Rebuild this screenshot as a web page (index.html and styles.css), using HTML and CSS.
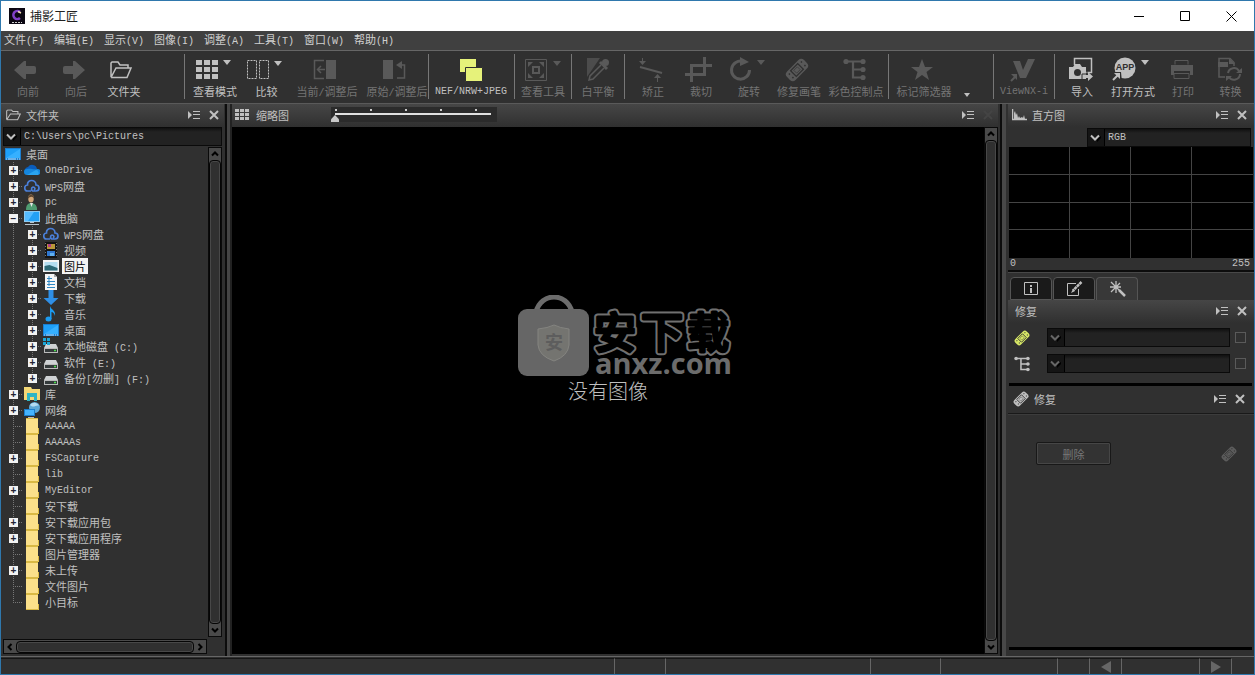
FILE: index.html
```html
<!DOCTYPE html>
<html lang="zh-CN">
<head>
<meta charset="utf-8">
<title>捕影工匠</title>
<link rel="stylesheet" href="styles.css">
</head>
<body>
<svg class="defs" aria-hidden="true">
  <symbol id="folder-line" viewBox="0 0 22 17"><path d="M1 15.500V2.500L2.500 1H8l2 2.500h7.500V7M1 15.500h16L21 7H6.500L1 15.500" fill="none" stroke="currentColor" stroke-width="1.500"/></symbol>
  <symbol id="grid" viewBox="0 0 15 12"><path d="M0 0h4v3H0zM5 0h4v3H5zM10 0h4v3h-4zM0 4h4v3H0zM5 4h4v3H5zM10 4h4v3h-4zM0 8h4v3H0zM5 8h4v3H5zM10 8h4v3h-4z" fill="currentColor"/></symbol>
  <symbol id="menu" viewBox="0 0 14 10"><path d="M1 1v8l4-4zM6 1h7v1H6zM6 4h7v1H6zM6 8h7v1H6z" fill="currentColor"/></symbol>
  <symbol id="close" viewBox="0 0 10 10"><path d="M1 1l8 8M9 1l-8 8" stroke="currentColor" stroke-width="2"/></symbol>
  <symbol id="chev" viewBox="0 0 12 8"><path d="M8 4l4-2v2L8 8z" fill="#000"/><path d="M2 1.500l4 4 4-4" fill="none" stroke="currentColor" stroke-width="2"/></symbol>
  <symbol id="bandage" viewBox="0 0 24 24"><g transform="rotate(-45 12 12)"><rect x="0" y="6" width="24" height="12" rx="4" fill="currentColor"/><rect x="7" y="8" width="10" height="8" fill="none" stroke="#303030" stroke-width="1.300"/><path d="M3 9.500h1.500M3 14.500h1.500M20 9.500h1.500M20 14.500h1.500" stroke="#303030" stroke-width="1.500"/><rect x="9.500" y="10" width="5" height="4" fill="none" stroke="#303030" stroke-width=".6"/></g></symbol>
  <symbol id="nodes" viewBox="0 0 23 23"><path d="M3 3.500h17M10 3.500v16h10M10 11.500h10" fill="none" stroke="currentColor" stroke-width="2.200"/><g fill="currentColor"><circle cx="3" cy="3.500" r="2.600"/><circle cx="20" cy="3.500" r="2.600"/><circle cx="20" cy="11.500" r="2.600"/><circle cx="20" cy="19.500" r="2.600"/></g></symbol>
  <symbol id="desk" viewBox="0 0 16 16"><rect x="0" y="2" width="16" height="12" fill="#1c7fd0"/><path d="M1 3h14v9H1z" fill="#1ea0f8"/><path d="M1 12L15 3v9z" fill="#36b0ff"/><path d="M1 13h14" stroke="#bfe4ff" stroke-dasharray="1 1 8 1"/></symbol>
  <symbol id="onedrive" viewBox="0 0 16 16"><path d="M1 11a4 4 0 0 1 3-6 5 5 0 0 1 9 2z" fill="#0a5dbd"/><path d="M3 13a3 3 0 0 1 0-6c4-1 6 1 10 0a3 3 0 0 1 1 6z" fill="#1586dd"/><path d="M3 13l9-5a3 3 0 0 1 2 5z" fill="#2aa4ef"/></symbol>
  <symbol id="wps" viewBox="0 0 16 16"><path d="M7 13H4a3 3 0 0 1-.5-6C3 1 12 1 12 7c4 0 4 6 0 6H9.500C7 13 7 9.500 9 9c2 0 2.500 2 1 3" fill="none" stroke="#4a7fd8" stroke-width="1.700"/></symbol>
  <symbol id="user" viewBox="0 0 16 16"><path d="M2 16c0-5 2-7 5-7s6 2 6 6v1z" fill="#4f9c72"/><path d="M6 9l1.500 4L9 9z" fill="#e8e8e8"/><ellipse cx="7" cy="4.500" rx="2.800" ry="4" fill="#d2a679"/><path d="M4 5C3 0 11-1 10 5 9 2 6 2 4 5z" fill="#5d4630"/></symbol>
  <symbol id="pc" viewBox="0 0 16 16"><rect x="0" y="1" width="16" height="11" fill="#8fc9ee"/><path d="M1 2h14v9H1z" fill="#23a0f4"/><path d="M1 2h9l-6 9H1z" fill="#55bbff"/><path d="M1 14.500h14M6 12.500h4" stroke="#b8c4cc"/></symbol>
  <symbol id="video" viewBox="0 0 16 16"><path d="M2 0h12v16H2z" fill="#141414"/><path d="M4 2h8v5H4z" fill="#b99639"/><path d="M5 2h3v3H5z" fill="#b33c88"/><path d="M4 9h8v5H4z" fill="#2f77d0"/><path d="M7 11h4v3H7z" fill="#62b1ed"/><path d="M2.500 1v14M13.500 1v14" stroke="#777" stroke-dasharray="1 2"/></symbol>
  <symbol id="pic" viewBox="0 0 16 16"><path d="M0 2h16v12H0z" fill="#f4f4f4"/><path d="M1.500 4h13v8.500h-13z" fill="#b3ddf0"/><path d="M1.500 8l5-1 8 3v2.500h-13z" fill="#2c6976"/></symbol>
  <symbol id="doc" viewBox="0 0 16 16"><path d="M2 0h9l3 3v13H2z" fill="#f6f6f6"/><path d="M11 0v3h3" fill="#aaa"/><path d="M4 4.500h5M4 7.500h8M4 10.500h8M4 13.500h8M6 2v10" stroke="#2e87c4"/></symbol>
  <symbol id="down" viewBox="0 0 16 16"><path d="M5.500 0h5v8h5L8 15 .5 8h5z" fill="#2f8fe6"/></symbol>
  <symbol id="music" viewBox="0 0 16 16"><path d="M7 0c1 4 6 4 5 10-1-3-2-4-3.500-4v7H7z" fill="#1c9cf2"/><ellipse cx="5.500" cy="13" rx="3" ry="2.500" fill="#1c9cf2"/></symbol>
  <symbol id="disk" viewBox="0 0 16 16"><path d="M3 6h10l2 4v5H1v-5z" fill="#cfd2d4"/><path d="M1.500 10.500h13v4h-13z" fill="#343a3b" stroke="#bbb"/><path d="M11 12.500h2" stroke="#4ce04c" stroke-width="1.500"/></symbol>
  <symbol id="sysdisk" viewBox="0 0 16 16"><use href="#disk"/><path d="M0 0h3v3H0zM4 0h3v3H4zM0 4h3v3H0zM4 4h3v3H4z" fill="#1ba7d8"/></symbol>
  <symbol id="lib" viewBox="0 0 16 16"><path d="M0 1h7l1 2h8v11H0z" fill="#f5d875"/><path d="M3 7h10v8h-3v-4H6v4H3z" fill="#2eb5c5"/></symbol>
  <symbol id="net" viewBox="0 0 16 16"><circle cx="10.500" cy="5.500" r="5.500" fill="#5ea8d6"/><path d="M6 3c3-4 8-2 9 1-3-2-5 3-9-1" fill="#b4dcf2"/><path d="M0 7h11v7H0z" fill="#1b7fcd"/><path d="M1 8h9v5H1z" fill="#45b4ff"/><path d="M4 15.500h6" stroke="#bbb"/></symbol>
  <symbol id="dir" viewBox="0 0 16 16"><path d="M2 0h12v10h1v6H2z" fill="#fbe08a"/><path d="M2 15.500h12.500V10M2 .5h12" fill="none" stroke="#d9b944"/></symbol>
</svg>

<div class="window">
  <header class="titlebar">
    <svg class="logo" viewBox="0 0 16 16"><path d="M0 0h16v16H0z" fill="#0b0712"/><path d="M11 4a4 4 0 1 0 0 6" fill="none" stroke="#8040c8" stroke-width="2.500"/><path d="M9 3.500l3 1.500" stroke="#f0dfb0" stroke-width="1.500"/><path d="M3 14.500h10" stroke="#ccc" stroke-dasharray="2 1"/></svg>
    <h1>捕影工匠</h1>
    <div class="winbtns">
      <button aria-label="最小化"><svg viewBox="0 0 11 11"><path d="M0 5.500h10" stroke="#000"/></svg></button>
      <button aria-label="最大化"><svg viewBox="0 0 11 11"><path d="M.5.5h9v9h-9z" fill="none" stroke="#000"/></svg></button>
      <button aria-label="关闭"><svg viewBox="0 0 11 11"><path d="M.5.5l10 10M10.500.5l-10 10" stroke="#000"/></svg></button>
    </div>
  </header>

  <nav class="menubar">
    <button>文件<span class="en">(F)</span></button>
    <button>编辑<span class="en">(E)</span></button>
    <button>显示<span class="en">(V)</span></button>
    <button>图像<span class="en">(I)</span></button>
    <button>调整<span class="en">(A)</span></button>
    <button>工具<span class="en">(T)</span></button>
    <button>窗口<span class="en">(W)</span></button>
    <button>帮助<span class="en">(H)</span></button>
  </nav>

  <div class="toolbar">
    <div class="group first">
      <button class="tool off"><svg viewBox="0 0 48 26"><path d="M10 14L20 5h2v5h8q2 0 2 2v4q0 2-2 2h-8v5h-2z" fill="currentColor"/></svg><span>向前</span></button>
      <button class="tool off"><svg viewBox="0 0 48 26"><path d="M33 14L23 5h-2v5h-8q-2 0-2 2v4q0 2 2 2h8v5h2z" fill="currentColor"/></svg><span>向后</span></button>
      <button class="tool"><svg viewBox="0 0 48 26"><path d="M11 21V7l1-1h6l2 3h8v3M11 21.500h16L31 12H16L11 21.500" fill="none" stroke="currentColor" stroke-width="1.500"/></svg><span>文件夹</span></button>
    </div>
    <div class="group">
      <button class="tool w60"><svg viewBox="0 0 48 26"><path d="M5 4h6v5H5zM13 4h6v5h-6zM21 4h6v5h-6zM5 11h6v5H5zM13 11h6v5h-6zM21 11h6v5h-6zM5 18h6v5H5zM13 18h6v5h-6zM21 18h6v5h-6zM32 4h8l-4 5z" fill="currentColor"/></svg><span>查看模式</span></button>
      <button class="tool w42"><svg viewBox="0 0 48 26"><path d="M4.500 4.500h9v18h-9zM16.500 4.500h9v18h-9z" fill="none" stroke="currentColor" stroke-dasharray="2 1"/><path d="M31 5h8l-4 5z" fill="currentColor"/></svg><span>比较</span></button>
      <button class="tool off w78"><svg viewBox="0 0 48 26"><path d="M23 4h10v19H23z" fill="currentColor"/><path d="M21 4.500h-9.500v18H21M22 13.500h-7M18 10l-3.500 3.500L18 17" fill="none" stroke="currentColor" stroke-width="1.500"/></svg><span>当前<b class="en">/</b>调整后</span></button>
      <button class="tool off w62"><svg viewBox="0 0 48 26"><path d="M10 4h10v19H10zM29 5v8l-6-4z" fill="currentColor"/><path d="M28 9h3.500v13H24" fill="none" stroke="currentColor" stroke-width="1.500"/></svg><span>原始<b class="en">/</b>调整后</span></button>
    </div>
    <div class="group nef">
      <button class="tool w84"><svg viewBox="0 0 48 26"><path d="M13 3h16v13H13z" fill="#e6f27a"/><path d="M18.500 11.500h17v14h-17z" fill="#e6f27a" stroke="#303030"/></svg><span class="en">NEF/NRW+JPEG</span></button>
    </div>
    <div class="group">
      <button class="tool off w56"><svg viewBox="0 0 48 26"><path d="M6.500 3.500h21v21h-21z" fill="none" stroke="currentColor"/><path d="M14 11h6v6h-6z" fill="none" stroke="currentColor" stroke-width="2"/><path d="M9 6h5l-5 5zM25 6h-5l5 5zM9 22h5l-5-5zM25 22h-5l5-5zM34 5h8l-4 5z" fill="currentColor"/></svg><span>查看工具</span></button>
    </div>
    <div class="group">
      <button class="tool off w52"><svg viewBox="0 0 48 26"><path d="M13 2h13L13 21z" fill="currentColor" opacity=".7"/><path d="M26 6l7 7" stroke="currentColor" stroke-width="3"/><circle cx="31.500" cy="6.500" r="3.500" fill="currentColor"/><path d="M27 9L16 20l-1 4 4-1L30 12" fill="#303030" stroke="currentColor" stroke-width="1.500"/></svg><span>白平衡</span></button>
    </div>
    <div class="group pad">
      <button class="tool off"><svg viewBox="0 0 48 26"><path d="M11 11l22 6" stroke="currentColor" stroke-width="2"/><path d="M13.500 2v4M28.500 21v5" stroke="currentColor"/><path d="M10 5h7l-3.500 4zM25 22h7l-3.500-4z" fill="currentColor"/></svg><span>矫正</span></button>
      <button class="tool off"><svg viewBox="0 0 48 26"><path d="M14.500 26V9.500H35M8 18.500h19.500V1" fill="none" stroke="currentColor" stroke-width="3"/></svg><span>裁切</span></button>
      <button class="tool off"><svg viewBox="0 0 48 26"><path d="M18 5.500A9 9 0 1 0 24.500 14" fill="none" stroke="currentColor" stroke-width="3"/><path d="M15 1l9 5-9 4zM32 4h8l-4 5z" fill="currentColor"/></svg><span>旋转</span></button>
      <button class="tool off w52"><svg viewBox="0 0 48 26"><use href="#bandage" x="10" y="2" width="24" height="24"/></svg><span>修复画笔</span></button>
      <button class="tool off w62"><svg viewBox="0 0 48 26"><use href="#nodes" x="11" y="2" width="23" height="23"/></svg><span>彩色控制点</span></button>
    </div>
    <div class="group">
      <button class="tool off w70"><svg viewBox="0 0 48 26"><path d="M22 3l3 8h8l-6.500 5 2.500 8-7-5-7 5 2.500-8L11 11h8z" fill="currentColor"/></svg><span>标记筛选器</span></button>
      <button class="more" aria-label="更多"><svg viewBox="0 0 6 4"><path d="M0 0h6L3 4z" fill="currentColor"/></svg></button>
    </div>
    <div class="group">
      <button class="tool off w60"><svg viewBox="0 0 48 26"><path d="M13 5h7l3 9 5-11h7l-9 19h-6z" fill="currentColor"/><path d="M11 25l4-4" stroke="currentColor" stroke-width="2"/><path d="M11 18h6v6z" fill="currentColor"/></svg><span class="en">ViewNX-i</span></button>
    </div>
    <div class="group last">
      <button class="tool w54"><svg viewBox="0 0 48 26"><path d="M16.500 9V2.500h17v14H28" fill="none" stroke="currentColor" stroke-width="1.500"/><path d="M11 11h4l2-3h5l2 3h4v12H11zM25 19h5v-3l5 4.500-5 4.500v-3h-5z" fill="currentColor"/><circle cx="19.500" cy="16.500" r="3.500" fill="#303030"/><path d="M24 24v-6h5v-3" fill="none" stroke="#303030"/></svg><span>导入</span></button>
      <button class="tool"><svg viewBox="0 0 48 26"><circle cx="16" cy="12" r="10.500" fill="currentColor"/><text x="16" y="14" class="app" text-anchor="middle">APP</text><path d="M3 16h9l1 10H3z" fill="#303030"/><path d="M5 17h6v6z" fill="currentColor"/><path d="M4 24l5-5" stroke="currentColor" stroke-width="2"/><path d="M32 4h8l-4 5z" fill="currentColor"/></svg><span>打开方式</span></button>
      <button class="tool w52 off"><svg viewBox="0 0 48 26"><path d="M16 8.500v-4h13v4M15 22.500h15v-5H15z" fill="none" stroke="currentColor"/><path d="M12 9h22v10h-3v-4H15v4h-3z" fill="currentColor"/></svg><span>打印</span></button>
      <button class="tool w42 off"><svg viewBox="0 0 48 26"><path d="M12 11V21h6M12 6V2.500h11l4 4V10" fill="none" stroke="currentColor" stroke-width="1.500"/><path d="M11 6h10v5H11zM22 2v6h6z" fill="currentColor"/><path d="M21 17a6 6 0 0 1 11-2M33 18a6 6 0 0 1-11 3" fill="none" stroke="currentColor" stroke-width="2"/><path d="M29 17h6v-5zM25 20h-6v5z" fill="currentColor"/></svg><span>转换</span></button>
    </div>
  </div>

  <main class="main">
    <section class="left">
      <div class="head">
        <svg class="hicon" viewBox="0 0 22 17"><use href="#folder-line"/></svg><h2>文件夹</h2>
        <button class="hb" aria-label="菜单"><svg class="m"><use href="#menu"/></svg></button>
        <button class="hb" aria-label="关闭"><svg class="x"><use href="#close"/></svg></button>
      </div>
      <div class="combo">
        <svg class="chev"><use href="#chev"/></svg>
        <select class="en" aria-label="路径"><option>C:\Users\pc\Pictures</option></select>
      </div>
      <div class="treewrap">
        <ul class="tree">
          <li class="root"><svg><use href="#desk"/></svg><span>桌面</span></li>
          <li><i class="rail"><button>+</button></i><svg><use href="#onedrive"/></svg><span class="en">OneDrive</span></li>
          <li><i class="rail"><button>+</button></i><svg><use href="#wps"/></svg><span><b class="en">WPS</b>网盘</span></li>
          <li><i class="rail"><button>+</button></i><svg><use href="#user"/></svg><span class="en">pc</span></li>
          <li><i class="rail"><button>−</button></i><svg><use href="#pc"/></svg><span>此电脑</span></li>
          <li><i class="line"></i><i class="rail"><button>+</button></i><svg><use href="#wps"/></svg><span><b class="en">WPS</b>网盘</span></li>
          <li><i class="line"></i><i class="rail"><button>+</button></i><svg><use href="#video"/></svg><span>视频</span></li>
          <li><i class="line"></i><i class="rail"><button>+</button></i><svg><use href="#pic"/></svg><span class="sel">图片</span></li>
          <li><i class="line"></i><i class="rail"><button>+</button></i><svg><use href="#doc"/></svg><span>文档</span></li>
          <li><i class="line"></i><i class="rail"><button>+</button></i><svg><use href="#down"/></svg><span>下载</span></li>
          <li><i class="line"></i><i class="rail"><button>+</button></i><svg><use href="#music"/></svg><span>音乐</span></li>
          <li><i class="line"></i><i class="rail"><button>+</button></i><svg><use href="#desk"/></svg><span>桌面</span></li>
          <li><i class="line"></i><i class="rail"><button>+</button></i><svg><use href="#sysdisk"/></svg><span>本地磁盘<b class="en"> (C:)</b></span></li>
          <li><i class="line"></i><i class="rail"><button>+</button></i><svg><use href="#disk"/></svg><span>软件<b class="en"> (E:)</b></span></li>
          <li><i class="line"></i><i class="rail end"><button>+</button></i><svg><use href="#disk"/></svg><span>备份<b class="en">[</b>勿删<b class="en">] (F:)</b></span></li>
          <li><i class="rail"><button>+</button></i><svg><use href="#lib"/></svg><span>库</span></li>
          <li><i class="rail"><button>+</button></i><svg><use href="#net"/></svg><span>网络</span></li>
          <li><i class="rail"></i><svg><use href="#dir"/></svg><span class="en">AAAAA</span></li>
          <li><i class="rail"></i><svg><use href="#dir"/></svg><span class="en">AAAAAs</span></li>
          <li><i class="rail"><button>+</button></i><svg><use href="#dir"/></svg><span class="en">FSCapture</span></li>
          <li><i class="rail"></i><svg><use href="#dir"/></svg><span class="en">lib</span></li>
          <li><i class="rail"><button>+</button></i><svg><use href="#dir"/></svg><span class="en">MyEditor</span></li>
          <li><i class="rail"></i><svg><use href="#dir"/></svg><span>安下载</span></li>
          <li><i class="rail"><button>+</button></i><svg><use href="#dir"/></svg><span>安下载应用包</span></li>
          <li><i class="rail"><button>+</button></i><svg><use href="#dir"/></svg><span>安下载应用程序</span></li>
          <li><i class="rail"></i><svg><use href="#dir"/></svg><span>图片管理器</span></li>
          <li><i class="rail"><button>+</button></i><svg><use href="#dir"/></svg><span>未上传</span></li>
          <li><i class="rail"></i><svg><use href="#dir"/></svg><span>文件图片</span></li>
          <li><i class="rail end"></i><svg><use href="#dir"/></svg><span>小目标</span></li>
        </ul>
        <div class="vscroll">
          <svg viewBox="0 0 8 8"><path d="M1 5.500l3-3 3 3" fill="none" stroke="#000" stroke-width="2"/></svg>
          <div class="thumb"></div>
          <svg viewBox="0 0 8 8"><path d="M1 2.500l3 3 3-3" fill="none" stroke="#000" stroke-width="2"/></svg>
        </div>
      </div>
      <div class="hscroll">
        <svg viewBox="0 0 8 8"><path d="M5.500 1l-3 3 3 3" fill="none" stroke="#000" stroke-width="2"/></svg>
        <div class="thumb"></div>
        <svg viewBox="0 0 8 8"><path d="M2.500 1l3 3-3 3" fill="none" stroke="#000" stroke-width="2"/></svg>
      </div>
    </section>
    <div class="split"></div>

    <section class="center">
      <div class="head">
        <svg class="gicon"><use href="#grid"/></svg><h2>缩略图</h2>
        <div class="zoom"><input type="range" min="0" max="100" value="0" aria-label="缩略图大小"></div>
        <button class="hb" aria-label="菜单"><svg class="m"><use href="#menu"/></svg></button>
        <button class="hb dim" aria-label="关闭" disabled><svg class="x"><use href="#close"/></svg></button>
      </div>
      <div class="viewwrap">
        <div class="view">
          <div class="msg">没有图像
            <div class="mark">
              <svg class="bag" viewBox="0 0 72 82"><path d="M18 17C23-3 49-3 54 17" fill="none" stroke="#6c6c6c" stroke-width="5"/><rect x="0" y="14" width="71" height="67" rx="9" fill="#666"/><path d="M20 34q10-1 16-4 6 3 15 4v16q-1 11-15 16-15-5-16-16z" fill="#747470" stroke="#848480"/><text x="36" y="54" text-anchor="middle" class="an">安</text></svg>
              <svg class="words" viewBox="0 0 142 82">
                <defs><text id="word" x="2 49 95" y="53">安下载</text></defs>
                <use href="#word" class="edge"/><use href="#word" class="core"/>
                <text x="3" y="79" class="site">anxz.com</text>
              </svg>
            </div>
          </div>
        </div>
        <div class="vscroll">
          <svg viewBox="0 0 8 8"><path d="M1 5.500l3-3 3 3" fill="none" stroke="#000" stroke-width="2"/></svg>
          <div class="thumb"></div>
          <svg viewBox="0 0 8 8"><path d="M1 2.500l3 3 3-3" fill="none" stroke="#000" stroke-width="2"/></svg>
        </div>
      </div>
    </section>
    <div class="split wide"></div>

    <section class="right">
      <div class="head">
        <svg class="histo" viewBox="0 0 15 12"><path d="M.5 0v10.500H15" fill="none" stroke="currentColor" stroke-width="1.500"/><path d="M2 10V4l1-2 1 4 1-2 1 5 1-2 1 2 2-1 1 1 1-3 1 4z" fill="currentColor"/></svg><h2>直方图</h2>
        <button class="hb" aria-label="菜单"><svg class="m"><use href="#menu"/></svg></button>
        <button class="hb" aria-label="关闭"><svg class="x"><use href="#close"/></svg></button>
      </div>
      <div class="combo rgb">
        <svg class="chev"><use href="#chev"/></svg>
        <select class="en" aria-label="通道"><option>RGB</option></select>
      </div>
      <div class="graph"><i></i><i></i><i></i><i></i><i></i><i></i><i></i><i></i><i></i><i></i><i></i><i></i><i></i><i></i><i></i><i></i></div>
      <div class="scale en"><span>0</span><span>255</span></div>
      <div class="tabs">
        <button aria-label="信息"><svg viewBox="0 0 18 18"><path d="M2.500 2.500h13v12h-13z" fill="none" stroke="currentColor"/><path d="M8 5h2v2H8zM8 8h2v5H8z" fill="currentColor"/></svg></button>
        <button aria-label="编辑"><svg viewBox="0 0 18 18"><path d="M11 3.500H2.500v12h11V9" fill="none" stroke="currentColor"/><path d="M16.500 2L8 10.500" stroke="currentColor" stroke-width="2.500" stroke-dasharray="3 .5"/><path d="M8 9l2 2-4 2z" fill="currentColor"/></svg></button>
        <button class="on" aria-label="修复"><svg viewBox="0 0 18 18"><path d="M8 1v12M2 7h11M3 2l9 9M3 12l9-9" stroke="currentColor" stroke-width="1.300"/><path d="M11 10l6 6" stroke="currentColor" stroke-width="2.500"/></svg></button>
      </div>
      <div class="head">
        <h2 class="solo">修复</h2>
        <button class="hb" aria-label="菜单"><svg class="m"><use href="#menu"/></svg></button>
        <button class="hb" aria-label="关闭"><svg class="x"><use href="#close"/></svg></button>
      </div>
      <div class="rows">
        <div class="rrow"><svg class="ric yel"><use href="#bandage"/></svg><div class="combo dimc"><svg class="chev"><use href="#chev"/></svg><select aria-label="修复画笔"><option></option></select></div><input type="checkbox" aria-label="启用修复画笔"></div>
        <div class="rrow"><svg class="ric"><use href="#nodes"/></svg><div class="combo dimc"><svg class="chev"><use href="#chev"/></svg><select aria-label="彩色控制点"><option></option></select></div><input type="checkbox" aria-label="启用彩色控制点"></div>
      </div>
      <div class="bar"></div>
      <div class="head flat">
        <svg class="ric"><use href="#bandage"/></svg><h2>修复</h2>
        <button class="hb" aria-label="菜单"><svg class="m"><use href="#menu"/></svg></button>
        <button class="hb" aria-label="关闭"><svg class="x"><use href="#close"/></svg></button>
      </div>
      <div class="acts"><button class="del" disabled>删除</button><svg class="ric"><use href="#bandage"/></svg></div>
      <div class="bar low"></div>
    </section>
  </main>

  <footer class="status">
    <div class="grow"></div><div class="s51"></div><div class="s204"></div><div class="s70"></div><div class="s117"></div><div class="s32"></div>
    <button class="s32" aria-label="上一张"><svg viewBox="0 0 10 12"><path d="M10 0v12L0 6z" fill="currentColor"/></svg></button>
    <div class="s78"></div>
    <button class="s32" aria-label="下一张"><svg viewBox="0 0 10 12"><path d="M0 0v12l10-6z" fill="currentColor"/></svg></button>
    <div class="tail"></div>
  </footer>
</div>
</body>
</html>
```
FILE: styles.css
```css
* { box-sizing: border-box; }
body {
  margin: 0;
  font: 11px/16px "Noto Sans CJK SC", sans-serif;
  color: #c0c0c0;
  background: #303030;
}
button, select { font: inherit; color: inherit; background: none; border: 0; padding: 0; margin: 0; }
h1, h2 { margin: 0; font-weight: normal; font-size: 11px; }
b { font-weight: normal; white-space: pre; }
svg { display: block; flex: none; }
.en { font-family: "Liberation Mono", monospace; font-size: 10px; }
.defs { position: absolute; width: 0; height: 0; }

.window { height: 100vh; display: flex; flex-direction: column; border: 1px solid #2f78ad; overflow: hidden; }

.titlebar { height: 30px; flex: none; display: flex; align-items: center; background: #fff; color: #222; padding-left: 8px; }
.logo { width: 16px; height: 16px; margin-right: 5px; }
.titlebar h1 { font-size: 12px; }
.winbtns { margin-left: auto; display: flex; }
.winbtns button { width: 46px; height: 30px; display: flex; align-items: center; justify-content: center; }
.winbtns svg { width: 11px; height: 11px; }

.menubar { height: 20px; flex: none; display: flex; gap: 10px; padding-left: 3px; background: #404040; border-bottom: 1px solid #666; color: #d0d0d0; }
.menubar button { height: 16px; white-space: nowrap; }

.toolbar { height: 53px; flex: none; display: flex; background: #303030; border-bottom: 1px solid #5a5a5a; padding-top: 3px; }
.group { display: flex; height: 45px; border-left: 1px solid #777; }
.group.first { border: 0; padding: 0 36px 0 3px; }
.group.nef { padding-right: 1px; }
.group.pad { padding: 0 1px 0 4px; }
.group.last { margin-right: auto; }
.tool { width: 48px; display: flex; flex-direction: column; align-items: center; white-space: nowrap; color: #c0c0c0; line-height: 18px; }
.tool svg { width: 48px; height: 26px; margin-top: 2px; }
.tool > .en { padding-top: 1px; }
.tool.off { color: #595959; }
.tool.off span { color: #747474; }
.w42 { width: 43px; }
.w52 { width: 52px; }
.w54 { width: 54px; }
.w56 { width: 56px; }
.w60 { width: 60px; }
.w62 { width: 62px; }
.w70 { width: 70px; }
.w78 { width: 78px; }
.w84 { width: 84px; }
.app { font: bold 9px "Liberation Sans", sans-serif; fill: #303030; }
.more { width: 34px; padding: 37px 23px 0 5px; }
.more svg { width: 6px; height: 4px; }

.main { flex: 1; min-height: 0; display: flex; }
.left { width: 223px; flex: none; display: flex; flex-direction: column; padding: 0 2px 2px; }
.center { flex: 1; min-width: 0; display: flex; flex-direction: column; }
.right { width: 246px; flex: none; display: flex; flex-direction: column; }
.split { width: 8px; flex: none; background: linear-gradient(90deg, #303030 1px, #0c0c0c 1px 3px, #454545 3px 6px, #222 6px); }
.split.wide { width: 10px; background: linear-gradient(90deg, #303030 2px, #0c0c0c 2px 4px, #484848 4px 8px, #303030 8px); }

.head { height: 23px; flex: none; display: flex; align-items: center; background: linear-gradient(#464646, #303030); padding: 0 2px 2px 3px; }
.left .head { margin: 0 -2px; padding: 0 0 2px 5px; }
.center .head { padding-right: 0; }
.head h2 { margin-right: auto; }
.hicon { width: 15px; height: 12px; margin-right: 5px; }
.gicon { width: 15px; height: 12px; margin-right: 6px; }
.histo { width: 15px; height: 12px; margin: 0 5px 0 1px; }
.head h2.solo { padding-left: 4px; }
.hb { height: 18px; width: 20px; display: flex; align-items: center; justify-content: center; }
.hb.dim { color: #444; }
.m { width: 14px; height: 10px; }
.x { width: 10px; height: 10px; }

.combo { display: flex; align-items: center; height: 19px; flex: none; background: #151515; border: 1px solid #0a0a0a; }
.chev { width: 12px; height: 8px; margin: 0 3px 0 1px; }
.combo select { flex: 1; min-width: 0; height: 17px; appearance: none; background: linear-gradient(#101010, #222 4px); border-left: 1px solid #000; padding: 1px 0 0 3px; }
.dimc { color: #666; }

.treewrap { flex: 1; min-height: 0; display: flex; }
.tree { flex: 1; min-width: 0; margin: 0; padding: 0 0 0 1px; list-style: none; overflow: hidden; }
.tree li { height: 16px; display: flex; align-items: center; }
.tree li > svg { width: 16px; height: 16px; margin: 0 3px 0 1px; }
.tree li > span { padding: 0 2px; white-space: nowrap; height: 16px; }
.tree li > .en { line-height: 18px; }
.tree .sel { background: #f4f4f4; color: #000; }
.rail, .line { width: 19px; height: 16px; flex: none; padding: 4px 0 0 5px; }
.rail {
  background:
    repeating-linear-gradient(#777 0 1px, transparent 1px 2px) 9px 0 / 1px 16px no-repeat,
    repeating-linear-gradient(90deg, #777 0 1px, transparent 1px 2px) 9px 8px / 10px 1px no-repeat;
}
.rail.end { background-size: 1px 8px, 10px 1px; }
.line { background: repeating-linear-gradient(#777 0 1px, transparent 1px 2px) 9px 0 / 1px 16px no-repeat; }
.rail button { display: block; width: 9px; height: 9px; background: #f2f2f2; color: #223; font: bold 10px/8px "Liberation Sans", sans-serif; text-align: center; }

.vscroll { width: 14px; flex: none; display: flex; flex-direction: column; align-items: center; background: #4a4a4a; border: 1px solid #0a0a0a; }
.vscroll svg { width: 8px; height: 8px; margin: 2px 0; }
.vscroll .thumb { flex: 1; width: 12px; }
.thumb { background: #303030; border: 1px solid #050505; border-radius: 4px; box-shadow: inset 0 0 0 1px #484848; }
.left .vscroll { margin: 1px 0 1px 0; }
.hscroll { height: 15px; flex: none; margin: 1px 15px 0 0; display: flex; align-items: center; background: #4a4a4a; border: 1px solid #0a0a0a; }
.hscroll svg { width: 8px; height: 8px; margin: 0 2px; }
.hscroll .thumb { flex: 1; height: 12px; }

.center .head h2 { margin-right: 42px; }
.zoom { width: 166px; height: 15px; margin-right: auto; padding: 0 6px 0 4px; background: repeating-linear-gradient(90deg, #ccc 0 2px, transparent 2px 35px) 4px 2px / 156px 2px no-repeat, #2b2b2b; }
.zoom input { display: block; appearance: none; width: 100%; height: 15px; margin: 0; background: linear-gradient(#e0e0e0, #e0e0e0) 0 6px / 100% 2px no-repeat; }
.zoom input::-webkit-slider-thumb { appearance: none; width: 8px; height: 7px; margin-top: 8px; margin-left: -4px; background: #c8c8c8; clip-path: polygon(50% 0, 100% 60%, 100% 100%, 0 100%, 0 60%); }
.viewwrap { flex: 1; min-height: 0; display: flex; background: #000; margin-bottom: 2px; }
.view { flex: 1; display: flex; align-items: center; justify-content: center; }
.msg { position: relative; font-size: 20px; line-height: 24px; font-weight: 300; color: #c0c0c0; }
.mark { position: absolute; left: -50px; bottom: 26px; display: flex; gap: 2px; align-items: flex-end; white-space: nowrap; }
.bag { width: 72px; height: 82px; }
.an { font: bold 18px "Noto Sans CJK SC", sans-serif; fill: #5d5d5d; }
.words { width: 142px; height: 82px; }
.edge, .core { font: 500 42px "Noto Sans CJK SC", sans-serif; fill: #000; stroke-linejoin: round; }
.edge { stroke: #707070; stroke-width: 7px; }
.core { stroke: #000; stroke-width: 3px; }
.site { font: bold 29px "Open Sans", sans-serif; fill: #6c6c6c; }

.rgb { margin: 1px 3px 0 79px; }
.graph { height: 111px; flex: none; margin: 0 1px; display: grid; grid-template: repeat(4, 1fr) / repeat(4, 1fr); background: #000; }
.graph i { border: 0 solid #444; border-width: 0 1px 1px 0; }
.graph i:nth-child(4n) { border-right: 0; }
.graph i:nth-child(n+13) { border-bottom: 0; }
.scale { display: flex; justify-content: space-between; padding: 0 4px 0 2px; line-height: 12px; border-bottom: 2px solid #0c0c0c; }
.tabs { display: flex; gap: 1px; padding: 4px 0 0 2px; border-top: 1px solid #484848; }
.tabs button { width: 42px; height: 23px; display: flex; align-items: center; justify-content: center; background: #1a1a1a; border: 1px solid #555; border-radius: 4px 4px 0 0; }
.tabs .on { background: #383838; border-bottom: 0; }
.tabs svg { width: 18px; height: 18px; }
.rows { display: flex; flex-direction: column; gap: 7px; padding: 5px 6px 10px; }
.rrow { display: flex; align-items: center; }
.rrow .combo { flex: 1; margin: 0 5px 0 17px; }
.ric { width: 16px; height: 16px; }
.yel { color: #d8e866; }
.rrow input { appearance: none; width: 11px; height: 11px; margin: 0 2px 0 0; border: 1px solid #5a5a5a; }
.bar { height: 3px; flex: none; background: #000; margin: 0 2px 0 1px; }
.head.flat { height: 28px; background: #303030; border-bottom: 1px solid #191919; box-shadow: 0 1px #3c3c3c; padding-right: 4px; }
.flat .ric { margin: 0 5px 0 2px; }
.acts { display: flex; align-items: center; justify-content: space-between; padding: 28px 17px 0 28px; color: #5c5c5c; }
.del { width: 75px; height: 23px; color: #777; background: #333; border: 1px solid #181818; border-radius: 2px; box-shadow: inset 0 0 0 1px #464646; }
.low { margin-top: auto; margin-bottom: 6px; }

.status { height: 18px; flex: none; display: flex; border-top: 1px solid #666; padding-top: 1px; color: #666; }
.status > * { border-right: 1px solid #666; border-top: 1px solid #151515; flex: none; }
.status .grow { flex: 1; }
.status .tail { width: 22px; border: 0; }
.status button { display: flex; align-items: center; justify-content: center; }
.status svg { width: 10px; height: 12px; }
.s32 { width: 32px; }
.s51 { width: 51px; }
.s70 { width: 70px; }
.s78 { width: 78px; }
.s117 { width: 117px; }
.s204 { width: 205px; }
```
